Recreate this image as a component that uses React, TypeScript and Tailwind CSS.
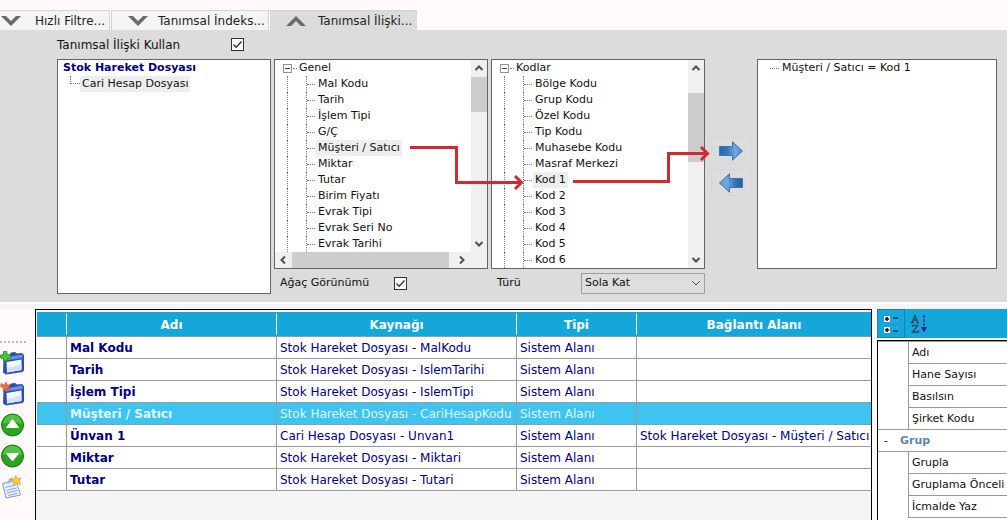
import React, { useState } from 'react';

type Dir = 'up' | 'down' | 'left' | 'right';

const generalFields = [
    'Mal Kodu', 'Tarih', 'İşlem Tipi', 'G/Ç', 'Müşteri / Satıcı', 'Miktar',
    'Tutar', 'Birim Fiyatı', 'Evrak Tipi', 'Evrak Seri No', 'Evrak Tarihi',
];

const codeFields = [
    'Bölge Kodu', 'Grup Kodu', 'Özel Kodu', 'Tip Kodu', 'Muhasebe Kodu', 'Masraf Merkezi',
    'Kod 1', 'Kod 2', 'Kod 3', 'Kod 4', 'Kod 5', 'Kod 6',
];

const rows = [
    { name: 'Mal Kodu', source: 'Stok Hareket Dosyası - MalKodu', type: 'Sistem Alanı', link: '' },
    { name: 'Tarih', source: 'Stok Hareket Dosyası - IslemTarihi', type: 'Sistem Alanı', link: '' },
    { name: 'İşlem Tipi', source: 'Stok Hareket Dosyası - IslemTipi', type: 'Sistem Alanı', link: '' },
    { name: 'Müşteri / Satıcı', source: 'Stok Hareket Dosyası - CariHesapKodu', type: 'Sistem Alanı', link: '' },
    { name: 'Ünvan 1', source: 'Cari Hesap Dosyası - Unvan1', type: 'Sistem Alanı', link: 'Stok Hareket Dosyası - Müşteri / Satıcı' },
    { name: 'Miktar', source: 'Stok Hareket Dosyası - Miktari', type: 'Sistem Alanı', link: '' },
    { name: 'Tutar', source: 'Stok Hareket Dosyası - Tutari', type: 'Sistem Alanı', link: '' },
];

const mainProps = ['Adı', 'Hane Sayısı', 'Basılsın', 'Şirket Kodu'];
const groupProps = ['Grupla', 'Gruplama Önceli', 'İcmalde Yaz'];

const chevrons: Record<Dir, string> = {
    up: 'M1.5 7 5 3.5 8.5 7',
    down: 'M1.5 3 5 6.5 8.5 3',
    left: 'M7 1.5 3.5 5 7 8.5',
    right: 'M3 1.5 6.5 5 3 8.5',
};

const ScrollArrow: React.FC<{ dir: Dir }> = ({ dir }) => (
    <button aria-label={`Scroll ${dir}`} className="flex h-4 w-4 shrink-0 items-center justify-center">
        <svg width="10" height="10" viewBox="0 0 10 10" fill="none" stroke="#505050" strokeWidth="2">
            <path d={chevrons[dir]} />
        </svg>
    </button>
);

const TabIcon: React.FC<{ up?: boolean }> = ({ up }) => (
    <svg width="20" height="10" viewBox="0 0 20 10" fill="#6b6b6b" className="shrink-0">
        <path d={up ? 'M0 10 10 0 20 10H15L10 5 5 10Z' : 'M0 0H5L10 5 15 0H20L10 10Z'} />
    </svg>
);

const CheckBox: React.FC<{ id: string }> = ({ id }) => (
    <span className="grid">
        <input
            id={id}
            type="checkbox"
            defaultChecked
            className="peer col-start-1 row-start-1 h-[13px] w-[13px] appearance-none border border-[#333] bg-white"
        />
        <svg className="pointer-events-none invisible col-start-1 row-start-1 peer-checked:visible" width="13" height="13" viewBox="0 0 13 13" fill="none" stroke="#333" strokeWidth="1.4">
            <path d="M2.5 6.5 5.2 9.2 10.5 3.5" />
        </svg>
    </span>
);

interface TreeProps {
    root: string;
    items: string[];
    selected: string;
    onSelect: (item: string) => void;
}

const Tree: React.FC<TreeProps> = ({ root, items, selected, onSelect }) => (
    <ul className="min-w-0 flex-1 overflow-hidden">
        <li className="flex h-4 items-center pl-2">
            <button aria-label={root} className="flex h-[9px] w-[9px] items-center justify-center border border-[#919191] bg-white">
                <span className="h-px w-[5px] bg-[#444]" />
            </button>
            <span className="mr-[2px] ml-px w-1 border-t border-dotted border-[#808080]" />
            {root}
        </li>
        {items.map((item) => (
            <li key={item} className="flex h-4 items-center pl-3">
                <span className="h-4 w-[19px] border-l border-dotted border-[#808080]" />
                <span className="flex h-4 w-[10px] items-center border-l border-dotted border-[#808080]">
                    <span className="w-2 border-t border-dotted border-[#808080]" />
                </span>
                <button onClick={() => onSelect(item)} className={`h-4 px-[2px] leading-4 whitespace-nowrap ${item === selected ? 'bg-[#eeeeee]' : ''}`}>
                    {item}
                </button>
            </li>
        ))}
    </ul>
);

const MoveArrow: React.FC<{ left?: boolean }> = ({ left }) => (
    <svg width="26" height="20" viewBox="0 0 26 20">
        <defs>
            <linearGradient id={left ? 'moveL' : 'moveR'} x1="0" y1="0" x2="1" y2="0">
                <stop offset="0" stopColor={left ? '#5e9bd6' : '#2a68ae'} />
                <stop offset="0.3" stopColor={left ? '#72a9dd' : '#2f72bb'} />
                <stop offset="0.7" stopColor={left ? '#2f72bb' : '#72a9dd'} />
                <stop offset="1" stopColor={left ? '#22609f' : '#4a86c4'} />
            </linearGradient>
        </defs>
        <path
            d={left ? 'M24.5 5.5H11.5V0.8L1.5 10 11.500 19.2V14.5H24.5Z' : 'M1.5 5.5H14.5V0.8L24.5 10 14.5 19.2V14.5H1.5Z'}
            fill={`url(#${left ? 'moveL' : 'moveR'})`}
            stroke="#3f74ac"
        />
    </svg>
);

const WindowIcon: React.FC<{ remove?: boolean }> = ({ remove }) => (
    <svg width="25" height="24" viewBox="0 0 25 24">
        <path d="M3.500 7 9 4 11 1.500 15 1 17 2.500 22 2 24 4V19.500L22.500 21 6 23.500 3 21.500Z" fill="#2f4fae" />
        <path d="M5 8 11 5.500 22 3.500 23 5 22 7 6 9.500Z" fill="#6a8fe4" />
        <path d="M6.500 11 21.500 8.500V19L7 21.500Z" fill="#f4f8ff" />
        <path d="M7 17.500 21.500 13V19L7 21.500Z" fill="#d3e1f9" />
        {remove ? (
            <path d="M1 1.500 4 3 6 0 7.500 3 10.500 2.500 8.500 5 10 8.500 6.500 7 3.500 9.500 3 6 0.500 4.500Z" fill="#ec7145" stroke="#c84d27" strokeWidth="0.5" />
        ) : (
            <path d="M3.500 0.500H7V3.500L10.500 4V7.500L7.500 7.500 7 10H3.500V7.500L0.500 7V4L3.500 3.500Z" fill="#46c23e" stroke="#239126" strokeWidth="0.8" strokeLinejoin="round" />
        )}
    </svg>
);

const MoveRowIcon: React.FC<{ down?: boolean }> = ({ down }) => (
    <svg width="25" height="24" viewBox="0 0 25 24">
        <circle cx="12.500" cy="12" r="11" fill="#2aa51f" stroke="#17730f" />
        <path d="M3 11A9.500 9.500 0 0 1 22 11Q12 7 3 11Z" fill="#6fd45c" opacity="0.6" />
        <path d={down ? 'M6.500 9.500H18.500L12.500 17Z' : 'M6.500 14.500H18.500L12.500 6.500Z'} fill="#fff" stroke="#fff" strokeLinejoin="round" />
    </svg>
);

const NoteIcon = () => (
    <svg width="25" height="24" viewBox="0 0 25 24">
        <path d="M2.500 8.500 16 5 20.500 20 6 23Z" fill="#e6effc" stroke="#7f9cce" />
        <path d="M5.500 12.500 15.500 10M6.500 15.500 16.500 13M7 18 17.500 15.500M8 20.500 17 18.500" stroke="#8ea9dc" fill="none" />
        <path d="M7 9 9 4 12 2.500 14 6Z" fill="#a5b4cd" />
        <path d="M15.500 0.500 17.500 3.500 21 3 19.500 6.500 20.500 9.500 17 8.500 14 10.500 13.500 7 11 4.500 14.500 3.500Z" fill="#f5cc38" stroke="#cf9a24" strokeWidth="0.6" />
    </svg>
);

const toolButtons = [
    { label: 'Ekle', icon: <WindowIcon /> },
    { label: 'Sil', icon: <WindowIcon remove /> },
    { label: 'Yukarı', icon: <MoveRowIcon /> },
    { label: 'Aşağı', icon: <MoveRowIcon down /> },
    { label: 'Not', icon: <NoteIcon /> },
];

const PropRow: React.FC<{ name: string; last?: boolean }> = ({ name, last }) => (
    <tr className="h-[22px]">
        <td className={`border-r border-[#9a9a9a] p-0 ${last ? 'border-b' : ''}`} />
        <td className="border-b border-[#9a9a9a] p-0 pt-px pl-[3px] whitespace-nowrap">{name}</td>
    </tr>
);

export default function App() {
    const [field, setField] = useState('Müşteri / Satıcı');
    const [code, setCode] = useState('Kod 1');
    const [activeRow, setActiveRow] = useState(3);

    const cell = 'border-r border-b border-[#9a9a9a] p-0 pt-px pl-[3px] whitespace-nowrap';

    return (
        <div className="flex h-screen flex-col overflow-hidden bg-[#fff9fa] font-['DejaVu_Sans',Verdana,sans-serif] text-[11px] leading-4 text-[#111]">
            <nav className="flex shrink-0 pt-[10px] text-[12px] leading-4 text-[#222]">
                <button className="flex h-5 w-[110px] items-center gap-[14px] border-t border-r border-[#d4d4d4] bg-[#f4f4f4] pl-px whitespace-nowrap">
                    <TabIcon />
                    Hızlı Filtre...
                </button>
                <button className="ml-px flex h-5 w-[158px] items-center gap-[10px] border border-b-0 border-[#d4d4d4] bg-[#f4f4f4] pl-4 whitespace-nowrap">
                    <TabIcon />
                    Tanımsal İndeks...
                </button>
                <button className="ml-px flex h-5 w-[147px] items-center gap-3 border-t border-[#d4d4d4] bg-[#dcdcdc] pl-4 whitespace-nowrap">
                    <TabIcon up />
                    Tanımsal İlişki...
                </button>
            </nav>

            <section className="relative shrink-0 bg-[#dcdcdc] pr-[10px] pb-2 pl-[57px]">
                <div className="flex h-[29px] items-center">
                    <label htmlFor="use-relation" className="w-[174px] text-[12px] leading-4">Tanımsal İlişki Kullan</label>
                    <CheckBox id="use-relation" />
                </div>

                <div className="flex">
                    <div className="h-[235px] w-[214px] shrink-0 border border-[#646464] bg-white">
                        <div className="pl-[5px] font-bold text-[#000080]">Stok Hareket Dosyası</div>
                        <div className="flex pl-3">
                            <span className="h-2 w-[10px] border-b border-l border-dotted border-[#808080]" />
                            <span className="bg-[#eeeeee] px-[2px]">Cari Hesap Dosyası</span>
                        </div>
                    </div>

                    <div className="ml-[3px] w-[214px] shrink-0">
                        <div className="h-[210px] border border-[#646464] bg-white">
                            <div className="flex h-48">
                                <Tree root="Genel" items={generalFields} selected={field} onSelect={setField} />
                                <div className="flex w-4 flex-col bg-[#f0f0f0]">
                                    <ScrollArrow dir="up" />
                                    <div className="mt-px h-[35px] bg-[#cdcdcd]" />
                                    <div className="flex-1" />
                                    <ScrollArrow dir="down" />
                                </div>
                            </div>
                            <div className="flex h-4 bg-[#f0f0f0] pr-[17px]">
                                <ScrollArrow dir="left" />
                                <div className="ml-px w-[157px] bg-[#cdcdcd]" />
                                <div className="flex-1" />
                                <ScrollArrow dir="right" />
                            </div>
                        </div>
                        <div className="flex h-[25px] items-center pt-[3px] pl-[6px]">
                            <label htmlFor="tree-view" className="w-[114px] whitespace-nowrap">Ağaç Görünümü</label>
                            <CheckBox id="tree-view" />
                        </div>
                    </div>

                    <div className="ml-[3px] w-[214px] shrink-0">
                        <div className="flex h-[210px] border border-[#646464] bg-white">
                            <Tree root="Kodlar" items={codeFields} selected={code} onSelect={setCode} />
                            <div className="flex w-4 flex-col bg-[#f0f0f0]">
                                <ScrollArrow dir="up" />
                                <div className="mt-[17px] h-[69px] bg-[#cdcdcd]" />
                                <div className="flex-1" />
                                <ScrollArrow dir="down" />
                            </div>
                        </div>
                        <div className="flex h-[25px] items-center pt-[3px] pl-[6px]">
                            <label htmlFor="join-type" className="w-[84px]">Türü</label>
                            <span className="grid flex-1 items-center">
                                <select id="join-type" className="col-start-1 row-start-1 h-[21px] appearance-none border border-[#a0a0a0] bg-[#dedede] pl-[3px]">
                                    <option>Sola Kat</option>
                                    <option>Sağa Kat</option>
                                </select>
                                <svg className="pointer-events-none col-start-1 row-start-1 mr-1 justify-self-end" width="10" height="10" viewBox="0 0 10 10" fill="none" stroke="#555">
                                    <path d="M1 3 5 7 9 3" />
                                </svg>
                            </span>
                        </div>
                    </div>

                    <div className="flex w-[52px] shrink-0 flex-col items-center gap-[5px] pt-[78px]">
                        <button aria-label="İlişki ekle" className="flex h-[27px] w-[41px] items-center justify-center border border-[#d5d8da]">
                            <MoveArrow />
                        </button>
                        <button aria-label="İlişki çıkar" className="flex h-[27px] w-[41px] items-center justify-center border border-[#d5d8da]">
                            <MoveArrow left />
                        </button>
                    </div>

                    <div className="h-[210px] min-w-0 flex-1 border border-[#646464] bg-white">
                        <div className="flex h-4 items-center pl-3 whitespace-nowrap">
                            <span className="mr-[3px] w-[9px] border-t border-dotted border-[#808080]" />
                            Müşteri / Satıcı = Kod 1
                        </div>
                    </div>
                </div>

                {/* field mapping arrows drawn over the trees */}
                <svg className="pointer-events-none absolute top-0 left-0 h-full w-full" fill="none" stroke="#cf2a30" strokeWidth="3">
                    <path d="M410 117.500H456.500V152.500H521M515 146 521.500 152.500 515 159" />
                    <path d="M573 151.500H668.500V123.500H707M701 117 707.500 123.500 701 130" />
                </svg>
            </section>

            <div className="h-[7px] shrink-0 border-t-2 border-white bg-[#f6f4f4]" />

            <div className="flex min-h-0 flex-1">
                <aside className="flex w-[35px] shrink-0 flex-col items-start pt-8">
                    <div className="mb-2 w-[26px] border-t-2 border-dotted border-[#bdb8b8]" />
                    <div className="flex flex-col gap-[7px]">
                        {toolButtons.map((b) => (
                            <button key={b.label} aria-label={b.label}>{b.icon}</button>
                        ))}
                    </div>
                </aside>

                <main className="min-w-0 flex-1 border border-b-0 border-black bg-[#f4f4f4] pt-[2px] pl-px">
                    <table className="w-full table-fixed border-separate border-spacing-0 text-[12px] leading-4 text-[#000080]">
                        <colgroup>
                            <col className="w-[30px]" />
                            <col className="w-[210px]" />
                            <col className="w-[240px]" />
                            <col className="w-[120px]" />
                            <col />
                        </colgroup>
                        <thead>
                            <tr className="h-[25px] bg-[#15a7da] text-white">
                                {['', 'Adı', 'Kaynağı', 'Tipi', 'Bağlantı Alanı'].map((h, i) => (
                                    <th key={h} className="border-b border-[#9a9a9a] p-0">
                                        <div className={`h-[22px] leading-6 ${i < 4 ? 'border-r border-white' : ''}`}>{h}</div>
                                    </th>
                                ))}
                            </tr>
                        </thead>
                        <tbody>
                            {rows.map((r, i) => (
                                <tr
                                    key={r.name}
                                    onClick={() => setActiveRow(i)}
                                    className={`h-[22px] ${i === activeRow ? 'bg-[#3ec4f1] text-[#e2f7ff]' : 'bg-white'}`}
                                >
                                    <td className={cell} />
                                    <td className={`${cell} font-bold`}>{r.name}</td>
                                    <td className={cell}>{r.source}</td>
                                    <td className={cell}>{r.type}</td>
                                    <td className="border-b border-[#9a9a9a] p-0 pt-px pl-[3px] whitespace-nowrap">{r.link}</td>
                                </tr>
                            ))}
                        </tbody>
                    </table>
                </main>

                <aside className="ml-[5px] flex w-[130px] shrink-0 flex-col overflow-hidden">
                    <div className="flex h-[29px] shrink-0 bg-[#15a7da]">
                        <button aria-label="Kategorilere göre" className="flex w-7 items-center justify-center border border-[#1583bb]">
                            <svg width="16" height="20" viewBox="0 0 16 20">
                                <path d="M1 2H7V8H1ZM1 13H7V19H1Z" fill="#f2ece4" />
                                <path d="M4 3V7M2 5H6M4 14V18M2 16H6" stroke="#111" strokeWidth="1.500" />
                                <path d="M10 4H15M10 17H15" stroke="#234" strokeWidth="1.500" />
                                <path d="M10 7H15M10 14H15" stroke="#78abc4" strokeDasharray="2 1" />
                            </svg>
                        </button>
                        <button aria-label="Alfabetik" className="flex w-7 items-center justify-center">
                            <svg width="18" height="20" viewBox="0 0 18 20" fill="none">
                                <path d="M2 8.500 5 1.500 8 8.500M3 6H7M1 8.500H4M6 8.500H9M2.500 13V11.500H8L2.500 18H8.500V16" stroke="#234c60" strokeWidth="1.300" />
                                <path d="M14 1V13" stroke="#353596" strokeWidth="1.500" strokeDasharray="3 1" />
                                <path d="M11 13H17L14 18.500Z" fill="#282896" />
                            </svg>
                        </button>
                    </div>
                    <div className="mt-[2px] min-h-0 flex-1 border-t border-l border-black bg-white">
                        <table className="w-full table-fixed border-separate border-spacing-0 border-t border-[#9a9a9a]">
                            <colgroup>
                                <col className="w-[31px]" />
                                <col />
                            </colgroup>
                            <tbody>
                                {mainProps.map((p, i) => <PropRow key={p} name={p} last={i === mainProps.length - 1} />)}
                                <tr className="h-[22px]">
                                    <td colSpan={2} className="border-b border-[#9a9a9a] p-0 pl-[6px]">
                                        <button className="flex gap-3">
                                            <span>-</span>
                                            <span className="font-bold text-[#5b88b0]">Grup</span>
                                        </button>
                                    </td>
                                </tr>
                                {groupProps.map((p) => <PropRow key={p} name={p} />)}
                            </tbody>
                        </table>
                    </div>
                </aside>
            </div>
        </div>
    );
}
